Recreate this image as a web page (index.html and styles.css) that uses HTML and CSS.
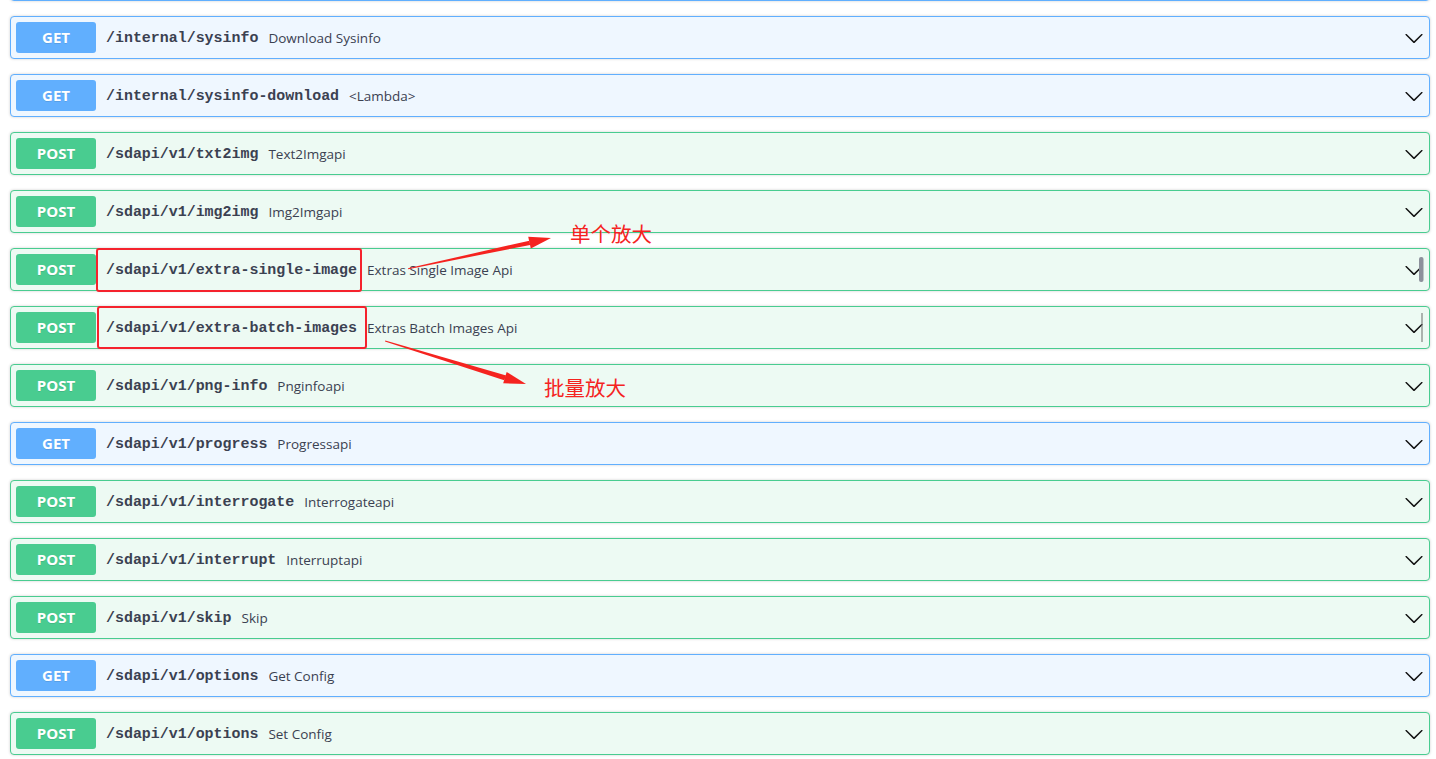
FILE: index.html
```html
<!DOCTYPE html>
<html>
<head>
<meta charset="utf-8">
<link rel="stylesheet" href="styles.css">
</head>
<body>
<div class="page">
  <div class="ops">
    <div class="op get stub"></div>
    <div class="op get"><span class="method">GET</span><span class="path">/internal/sysinfo</span><span class="desc">Download Sysinfo</span><svg class="arrow" viewBox="0 0 20 20"><path d="M17.418 6.109c.272-.268.709-.268.979 0s.271.701 0 .969l-7.908 7.83c-.27.268-.707.268-.979 0l-7.908-7.830c-.27-.268-.27-.701 0-.969.271-.268.709-.268.98 0L10 13.25l7.418-7.141z"/></svg></div>
    <div class="op get"><span class="method">GET</span><span class="path">/internal/sysinfo-download</span><span class="desc">&lt;Lambda&gt;</span><svg class="arrow" viewBox="0 0 20 20"><path d="M17.418 6.109c.272-.268.709-.268.979 0s.271.701 0 .969l-7.908 7.83c-.27.268-.707.268-.979 0l-7.908-7.83c-.27-.268-.27-.701 0-.969.271-.268.709-.268.98 0L10 13.25l7.418-7.141z"/></svg></div>
    <div class="op post"><span class="method">POST</span><span class="path">/sdapi/v1/txt2img</span><span class="desc">Text2Imgapi</span><svg class="arrow" viewBox="0 0 20 20"><path d="M17.418 6.109c.272-.268.709-.268.979 0s.271.701 0 .969l-7.908 7.83c-.27.268-.707.268-.979 0l-7.908-7.83c-.27-.268-.27-.701 0-.969.271-.268.709-.268.98 0L10 13.25l7.418-7.141z"/></svg></div>
    <div class="op post"><span class="method">POST</span><span class="path">/sdapi/v1/img2img</span><span class="desc">Img2Imgapi</span><svg class="arrow" viewBox="0 0 20 20"><path d="M17.418 6.109c.272-.268.709-.268.979 0s.271.701 0 .969l-7.908 7.83c-.27.268-.707.268-.979 0l-7.908-7.83c-.27-.268-.27-.701 0-.969.271-.268.709-.268.98 0L10 13.25l7.418-7.141z"/></svg></div>
    <div class="op post"><span class="method">POST</span><span class="path">/sdapi/v1/extra-single-image</span><span class="desc">Extras Single Image Api</span><svg class="arrow" viewBox="0 0 20 20"><path d="M17.418 6.109c.272-.268.709-.268.979 0s.271.701 0 .969l-7.908 7.83c-.27.268-.707.268-.979 0l-7.908-7.83c-.27-.268-.27-.701 0-.969.271-.268.709-.268.98 0L10 13.25l7.418-7.141z"/></svg></div>
    <div class="op post"><span class="method">POST</span><span class="path">/sdapi/v1/extra-batch-images</span><span class="desc">Extras Batch Images Api</span><svg class="arrow" viewBox="0 0 20 20"><path d="M17.418 6.109c.272-.268.709-.268.979 0s.271.701 0 .969l-7.908 7.83c-.27.268-.707.268-.979 0l-7.908-7.83c-.27-.268-.27-.701 0-.969.271-.268.709-.268.98 0L10 13.25l7.418-7.141z"/></svg></div>
    <div class="op post"><span class="method">POST</span><span class="path">/sdapi/v1/png-info</span><span class="desc">Pnginfoapi</span><svg class="arrow" viewBox="0 0 20 20"><path d="M17.418 6.109c.272-.268.709-.268.979 0s.271.701 0 .969l-7.908 7.83c-.27.268-.707.268-.979 0l-7.908-7.83c-.27-.268-.27-.701 0-.969.271-.268.709-.268.98 0L10 13.25l7.418-7.141z"/></svg></div>
    <div class="op get"><span class="method">GET</span><span class="path">/sdapi/v1/progress</span><span class="desc">Progressapi</span><svg class="arrow" viewBox="0 0 20 20"><path d="M17.418 6.109c.272-.268.709-.268.979 0s.271.701 0 .969l-7.908 7.83c-.27.268-.707.268-.979 0l-7.908-7.83c-.27-.268-.27-.701 0-.969.271-.268.709-.268.98 0L10 13.25l7.418-7.141z"/></svg></div>
    <div class="op post"><span class="method">POST</span><span class="path">/sdapi/v1/interrogate</span><span class="desc">Interrogateapi</span><svg class="arrow" viewBox="0 0 20 20"><path d="M17.418 6.109c.272-.268.709-.268.979 0s.271.701 0 .969l-7.908 7.83c-.27.268-.707.268-.979 0l-7.908-7.83c-.27-.268-.27-.701 0-.969.271-.268.709-.268.98 0L10 13.25l7.418-7.141z"/></svg></div>
    <div class="op post"><span class="method">POST</span><span class="path">/sdapi/v1/interrupt</span><span class="desc">Interruptapi</span><svg class="arrow" viewBox="0 0 20 20"><path d="M17.418 6.109c.272-.268.709-.268.979 0s.271.701 0 .969l-7.908 7.83c-.27.268-.707.268-.979 0l-7.908-7.83c-.27-.268-.27-.701 0-.969.271-.268.709-.268.98 0L10 13.25l7.418-7.141z"/></svg></div>
    <div class="op post"><span class="method">POST</span><span class="path">/sdapi/v1/skip</span><span class="desc">Skip</span><svg class="arrow" viewBox="0 0 20 20"><path d="M17.418 6.109c.272-.268.709-.268.979 0s.271.701 0 .969l-7.908 7.83c-.27.268-.707.268-.979 0l-7.908-7.83c-.27-.268-.27-.701 0-.969.271-.268.709-.268.98 0L10 13.25l7.418-7.141z"/></svg></div>
    <div class="op get"><span class="method">GET</span><span class="path">/sdapi/v1/options</span><span class="desc">Get Config</span><svg class="arrow" viewBox="0 0 20 20"><path d="M17.418 6.109c.272-.268.709-.268.979 0s.271.701 0 .969l-7.908 7.83c-.27.268-.707.268-.979 0l-7.908-7.83c-.27-.268-.27-.701 0-.969.271-.268.709-.268.98 0L10 13.25l7.418-7.141z"/></svg></div>
    <div class="op post"><span class="method">POST</span><span class="path">/sdapi/v1/options</span><span class="desc">Set Config</span><svg class="arrow" viewBox="0 0 20 20"><path d="M17.418 6.109c.272-.268.709-.268.979 0s.271.701 0 .969l-7.908 7.83c-.27.268-.707.268-.979 0l-7.908-7.83c-.27-.268-.27-.701 0-.969.271-.268.709-.268.98 0L10 13.25l7.418-7.141z"/></svg></div>
  </div>

  <svg class="marks" viewBox="0 0 1436 759" width="1436" height="759">
    <rect x="97" y="249" width="264" height="42" rx="2" class="box"/>
    <rect x="98" y="307" width="268" height="41" rx="2" class="box"/>
    <polygon class="shaft" points="408,268.3 408.2,269.2 530.2,244.9 529.4,240.7"/>
    <polygon class="head" points="551,238 530.8,248.6 528.2,236.8"/>
    <polygon class="shaft" points="385,341.4 385.3,340.6 506.2,375.4 504.2,380.2"/>
    <polygon class="head" points="526,384 503.2,383.3 506.7,371.9"/>
    <rect x="1419" y="257" width="4.5" height="25" rx="2" class="thumb"/>
    <rect x="1421.5" y="313" width="1" height="29" class="caret"/>
  </svg>
  <span class="note note-single">单个放大</span>
  <span class="note note-batch">批量放大</span>
</div>
</body>
</html>
```

FILE: styles.css
```css
html, body {
  margin: 0;
  padding: 0;
  background: #ffffff;
  overflow: hidden;
}

.page {
  position: relative;
  width: 1436px;
  height: 759px;
  overflow: hidden;
}

.ops {
  display: flex;
  flex-direction: column;
  gap: 15px;
  margin-top: -42px;
  padding: 0 6px 0 10px;
}

.op {
  display: flex;
  align-items: center;
  padding: 5px;
  border: 1px solid;
  border-radius: 4px;
  box-shadow: 0 0 3px rgba(0, 0, 0, 0.19);
  color: #3b4151;
}

.op.stub {
  height: 31px;
}

.op.get {
  background: #eff7ff;
  border-color: #61affe;
}

.op.post {
  background: #edfaf3;
  border-color: #49cc90;
}

.method {
  min-width: 80px;
  padding: 6px 0;
  border-radius: 3px;
  font-family: "Open Sans", "Noto Sans", sans-serif;
  font-size: 15px;
  line-height: 19px;
  font-weight: 700;
  color: #ffffff;
  text-align: center;
  text-shadow: 0 1px 0 rgba(0, 0, 0, 0.1);
}

.get .method { background: #61affe; }
.post .method { background: #49cc90; }

.path {
  padding: 2px 10px 0;
  font-family: "Liberation Mono", monospace;
  font-size: 14.94px;
  font-weight: 700;
  color: #3b4151;
  line-height: 19px;
}

.desc {
  flex: 1 1 auto;
  padding-top: 2px;
  font-family: "Open Sans", "Noto Sans", sans-serif;
  font-size: 13.5px;
  color: #3b4151;
  line-height: 19px;
}

.arrow {
  width: 20px;
  height: 20px;
  flex: none;
  fill: #111111;
}

.marks {
  position: absolute;
  left: 0;
  top: 0;
  pointer-events: none;
}

.box {
  fill: none;
  stroke: #f5222d;
  stroke-width: 2;
}

.shaft, .head {
  fill: #f5231f;
}

.thumb { fill: #8d919c; }
.caret { fill: #6a6a6a; }

.note {
  position: absolute;
  font-family: "Noto Sans CJK SC", sans-serif;
  font-size: 20.5px;
  line-height: 20px;
  color: #f5231f;
  white-space: nowrap;
}

.note-single { left: 570px; top: 223px; }
.note-batch { left: 544px; top: 377px; }
```
